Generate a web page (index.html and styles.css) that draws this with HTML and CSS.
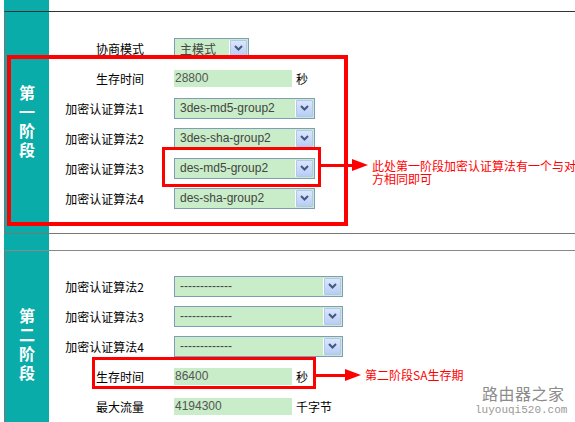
FILE: index.html
```html
<!DOCTYPE html>
<html lang="zh-CN">
<head>
    <meta charset="UTF-8">
    <title>IKE 安全策略</title>
    <link rel="stylesheet" href="styles.css">
</head>
<body>
    <div class="page">

        <!-- 第一阶段 -->
        <div class="stage stage-one">
            <div class="stage-name">第一阶段</div>
            <div class="fields">
                <div class="row">
                    <label>协商模式</label>
                    <div class="ctrl">
                        <div class="select select-mode"><span class="val">主模式</span><span class="drop"><svg width="9" height="6" viewBox="0 0 9 6"><path d="M1 1 L4.5 4.5 L8 1" fill="none" stroke="#44587f" stroke-width="2"/></svg></span></div>
                    </div>
                </div>
                <div class="row">
                    <label>生存时间</label>
                    <div class="ctrl"><input class="text" type="text" value="28800"><span class="unit">秒</span></div>
                </div>
                <div class="row">
                    <label>加密认证算法1</label>
                    <div class="ctrl">
                        <div class="select"><span class="val">3des-md5-group2</span><span class="drop"><svg width="9" height="6" viewBox="0 0 9 6"><path d="M1 1 L4.5 4.5 L8 1" fill="none" stroke="#44587f" stroke-width="2"/></svg></span></div>
                    </div>
                </div>
                <div class="row">
                    <label>加密认证算法2</label>
                    <div class="ctrl">
                        <div class="select"><span class="val">3des-sha-group2</span><span class="drop"><svg width="9" height="6" viewBox="0 0 9 6"><path d="M1 1 L4.5 4.5 L8 1" fill="none" stroke="#44587f" stroke-width="2"/></svg></span></div>
                    </div>
                </div>
                <div class="row">
                    <label>加密认证算法3</label>
                    <div class="ctrl">
                        <div class="select"><span class="val">des-md5-group2</span><span class="drop"><svg width="9" height="6" viewBox="0 0 9 6"><path d="M1 1 L4.5 4.5 L8 1" fill="none" stroke="#44587f" stroke-width="2"/></svg></span></div>
                    </div>
                </div>
                <div class="row">
                    <label>加密认证算法4</label>
                    <div class="ctrl">
                        <div class="select"><span class="val">des-sha-group2</span><span class="drop"><svg width="9" height="6" viewBox="0 0 9 6"><path d="M1 1 L4.5 4.5 L8 1" fill="none" stroke="#44587f" stroke-width="2"/></svg></span></div>
                    </div>
                </div>
            </div>
        </div>

        <!-- 第二阶段 -->
        <div class="stage stage-two">
            <div class="stage-name">第二阶段</div>
            <div class="fields">
                <div class="row">
                    <label>加密认证算法2</label>
                    <div class="ctrl">
                        <div class="select select-wide"><span class="val">-------------</span><span class="drop"><svg width="9" height="6" viewBox="0 0 9 6"><path d="M1 1 L4.5 4.5 L8 1" fill="none" stroke="#44587f" stroke-width="2"/></svg></span></div>
                    </div>
                </div>
                <div class="row">
                    <label>加密认证算法3</label>
                    <div class="ctrl">
                        <div class="select select-wide"><span class="val">-------------</span><span class="drop"><svg width="9" height="6" viewBox="0 0 9 6"><path d="M1 1 L4.5 4.5 L8 1" fill="none" stroke="#44587f" stroke-width="2"/></svg></span></div>
                    </div>
                </div>
                <div class="row">
                    <label>加密认证算法4</label>
                    <div class="ctrl">
                        <div class="select select-wide"><span class="val">-------------</span><span class="drop"><svg width="9" height="6" viewBox="0 0 9 6"><path d="M1 1 L4.5 4.5 L8 1" fill="none" stroke="#44587f" stroke-width="2"/></svg></span></div>
                    </div>
                </div>
                <div class="row">
                    <label>生存时间</label>
                    <div class="ctrl"><input class="text" type="text" value="86400"><span class="unit">秒</span></div>
                </div>
                <div class="row">
                    <label>最大流量</label>
                    <div class="ctrl"><input class="text" type="text" value="4194300"><span class="unit">千字节</span></div>
                </div>
            </div>
        </div>
    </div>

    <!-- 标注 -->
    <div class="mark mark-one"></div>
    <div class="mark mark-algo"></div>
    <div class="mark mark-life"></div>

    <div class="arrow arrow-algo"><span class="shaft"></span><span class="head"></span></div>
    <div class="note note-algo">此处第一阶段加密认证算法有一个与对方相同即可</div>

    <div class="arrow arrow-life"><span class="shaft"></span><span class="head"></span></div>
    <div class="note note-life">第二阶段SA生存期</div>

    <div class="watermark">
        <div class="wm-name">路由器之家</div>
        <div class="wm-url">luyouqi520.com</div>
    </div>
</body>
</html>
```

FILE: styles.css
```css
html, body {
    overflow: hidden;
}
body {
    margin: 0;
    background: #fff;
    font-family: "Noto Sans CJK SC", sans-serif;
    font-size: 12px;
    color: #000;
}

/* teal stripe runs down the whole left side */
.page {
    margin-left: 4px;
    padding-top: 11px;
    min-height: 460px;
    background: linear-gradient(90deg, #0aaca9 45px, #fff 45px);
}

.stage {
    display: grid;
    grid-template-columns: 44px 1fr;
    border-left: 1px solid #777;
}
.stage-one {
    border-top: 1px solid #333;
    border-bottom: 1px solid #777;
}
.stage-two {
    margin-top: 16px;
    border-top: 1px solid #888;
}

.stage-name {
    align-self: center;
    writing-mode: vertical-rl;
    text-orientation: upright;
    justify-self: center;
    color: #fff;
    font-size: 16px;
    font-weight: bold;
    letter-spacing: 3px;
    line-height: 16px;
}

.fields {
    padding: 21px 0 20px;
}
.stage-two .fields {
    padding: 20px 0 20px;
}

.row {
    display: grid;
    grid-template-columns: 95px auto;
    column-gap: 30px;
    align-items: center;
    height: 30px;
}
.row label {
    text-align: right;
    white-space: nowrap;
}
.ctrl {
    display: flex;
    align-items: center;
    gap: 4px;
}

/* xp style dropdown */
.select {
    display: flex;
    box-sizing: border-box;
    width: 141px;
    height: 21px;
    border: 1px solid #7f9db9;
    background: #c8edc8;
    font-family: "Liberation Sans", Arial, sans-serif;
    color: #444;
}
.select-mode {
    width: 75px;
    height: 20px;
}
.select-mode .val {
    font-family: "Noto Sans CJK SC", sans-serif;
    font-size: 12px;
}
.select-wide {
    width: 169px;
}
.select .val {
    flex: 1;
    padding-left: 5px;
    line-height: 19px;
    white-space: nowrap;
    overflow: hidden;
}
.select .drop {
    display: flex;
    align-items: center;
    justify-content: center;
    width: 15px;
    margin: 1px;
    border: 1px solid #b3c6ee;
    border-radius: 1px;
    background: linear-gradient(#dbe6fc, #b8cdf6);
    box-shadow: -1px 0 0 #fff;
}

.text {
    box-sizing: border-box;
    width: 118px;
    height: 17px;
    border: none;
    padding: 0 1px;
    background: #c8edc8;
    font-family: "Liberation Sans", Arial, sans-serif;
    font-size: 12px;
    color: #555;
}
.unit {
    white-space: nowrap;
}

/* red call-outs drawn over the form */
.mark {
    position: absolute;
    box-sizing: border-box;
    border: 3px solid #f00;
}
.mark-one {
    left: 7px;
    top: 55px;
    width: 341px;
    height: 171px;
    border-width: 4px;
}
.mark-algo {
    left: 162px;
    top: 147px;
    width: 159px;
    height: 40px;
}
.mark-life {
    left: 92px;
    top: 357px;
    width: 224px;
    height: 32px;
}

.arrow {
    position: absolute;
    display: flex;
    align-items: center;
    height: 12px;
}
.arrow .shaft {
    height: 3px;
    background: #f00;
}
.arrow .head {
    width: 0;
    height: 0;
    border-left: 16px solid #f00;
    border-top: 6px solid transparent;
    border-bottom: 6px solid transparent;
}
.arrow-algo {
    left: 321px;
    top: 159px;
}
.arrow-algo .shaft {
    width: 31px;
}
.arrow-life {
    left: 316px;
    top: 369px;
}
.arrow-life .shaft {
    width: 29px;
}

.note {
    position: absolute;
    color: #f00;
    font-size: 12px;
    line-height: 13px;
}
.note-algo {
    left: 372px;
    top: 159px;
    width: 206px;
}
.note-life {
    left: 365px;
    top: 368px;
    white-space: nowrap;
}

.watermark {
    position: absolute;
    left: 475px;
    top: 382px;
    color: #8c8c8c;
    text-shadow: 0 0 1px #fff;
}
.wm-name {
    padding-left: 7px;
    font-size: 16px;
    line-height: 22px;
    letter-spacing: 0.5px;
}
.wm-url {
    font-family: "Liberation Mono", monospace;
    font-size: 11px;
    line-height: 13px;
    color: #999;
}
```
